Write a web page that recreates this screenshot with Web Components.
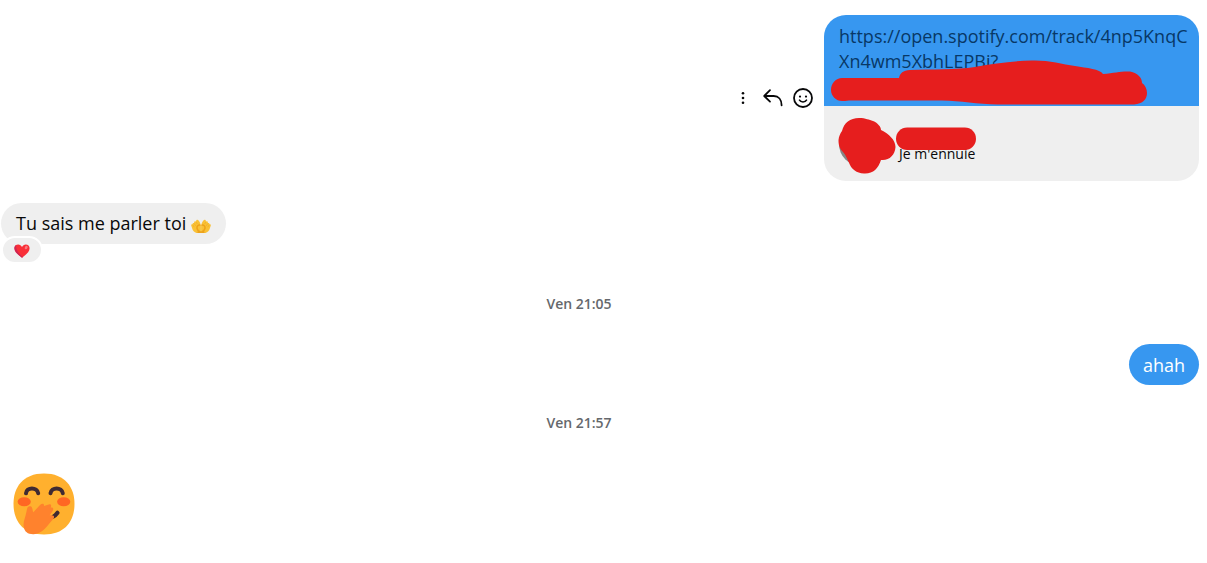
<!DOCTYPE html>
<html lang="fr">
<head>
<meta charset="utf-8">
<meta name="viewport" content="width=device-width">
<title>Discussion</title>
<style>
  body { margin: 0; background: #fff; font-family: "Open Sans", "Noto Sans", sans-serif; color: #080809; }
</style>
</head>
<body>
<chat-thread>
  <chat-message side="out">
    <message-actions slot="actions"></message-actions>
    <shared-link href="https://open.spotify.com/track/4np5KnqCXn4wm5XbhLEPBi" caption="Je m'ennuie">https://open.spotify.com/track/4np5KnqC<wbr>Xn4wm5XbhLEPBi?</shared-link>
  </chat-message>
  <chat-message side="in">
    <text-bubble>Tu sais me parler toi <palms-emoji></palms-emoji><heart-reaction slot="reaction"></heart-reaction></text-bubble>
  </chat-message>
  <time-divider>Ven 21:05</time-divider>
  <chat-message side="out"><text-bubble tone="own">ahah</text-bubble></chat-message>
  <time-divider>Ven 21:57</time-divider>
  <chat-message side="in"><giggle-emoji></giggle-emoji></chat-message>
</chat-thread>
<script>
const define = (name, html, setup) => customElements.define(name, class extends HTMLElement {
  constructor() {
    super();
    this.attachShadow({ mode: "open" }).innerHTML = html;
  }
  connectedCallback() { if (setup) setup(this, this.shadowRoot); }
});

define("chat-thread", `
<style>
  :host { display: flex; flex-direction: column; padding: 15px 8px 28px 1px; }
</style>
<slot></slot>`);

define("chat-message", `
<style>
  :host { display: flex; align-items: center; gap: 9px; }
  :host([side="out"]) { justify-content: flex-end; }
  :host([side="in"]:not(:last-of-type)) { margin-top: 22px; }
  :host([side="in"]:last-of-type) { padding-left: 12px; }
</style>
<slot name="actions"></slot><slot></slot>`);

define("message-actions", `
<style>
  :host { display: flex; align-items: center; gap: 6px; }
  button { display: grid; place-items: center; width: 24px; height: 24px; padding: 0; border: 0; background: none; color: #080809; cursor: pointer; }
  svg { display: block; width: 22px; height: 22px; fill: none; stroke: currentColor; stroke-width: 1.8; stroke-linecap: round; stroke-linejoin: round; }
  .dot { fill: currentColor; stroke: none; }
</style>
<button type="button" aria-label="Plus"><svg viewBox="0 0 22 22"><circle class="dot" cx="11" cy="6.3" r="1.3"/><circle class="dot" cx="11" cy="11" r="1.3"/><circle class="dot" cx="11" cy="15.7" r="1.3"/></svg></button>
<button type="button" aria-label="Répondre"><svg viewBox="0 0 22 22"><path d="M8 3.2 2.2 9 8 14.6M2.5 9h9.3c4.700 0 7.8 3.5 7.8 9.3"/></svg></button>
<button type="button" aria-label="Réagir"><svg viewBox="0 0 22 22"><circle cx="11" cy="11" r="9"/><path d="M7.5 13.2c1.3 2.300 5.7 2.300 7 0" stroke-width="1.6"/><circle class="dot" cx="8" cy="9.6" r="1.1"/><circle class="dot" cx="14" cy="9.6" r="1.1"/></svg></button>`);

define("shared-link", `
<style>
  :host { display: block; position: relative; width: 375px; max-width: 100%; border-radius: 22px; overflow: hidden; }
  .url { display: grid; grid-template-rows: 50px 25px; padding: 9px 10px 7px 15px; background: #3797f0; }
  a { color: #083866; font-size: 18px; line-height: 25px; text-decoration: none; }
  .card { display: flex; align-items: center; gap: 16px; padding: 15px; background: #efefef; }
  .avatar { width: 44px; height: 44px; border-radius: 50%; background: #858585; }
  .about { display: grid; grid-template-rows: 23px 20px; height: 45px; }
  .caption { font-size: 14px; line-height: 20px; grid-row: 2; }
  .marks { position: absolute; top: 0; left: 0; width: 375px; height: 166px; fill: #e61e1e; pointer-events: none; }
</style>
<div class="url"><a><slot></slot></a></div>
<div class="card"><div class="avatar"></div><div class="about"><div class="caption"></div></div></div>
<svg class="marks" viewBox="0 0 375 166" aria-hidden="true">
  <path d="M18 63H75C76 58 79 55.5 86 55C108 54 132 55 151 52C171 48 190 46 208 45.5C224 45 238 49 251 51C263 53 276 54 279 59C291 58 297 56 306 56.5C314 58 318 63 318 68C321 70 323 74 323 78C323 84 319 89 310 89.5H174C153 89 137 86 118 85.5H25C22 86 20 86 18 86C12 86 7 81 7 75C7 68 12 63 18 63Z"/>
  <path d="M35 103C42 103 45 105 49 106C54 108 57 112 57 115C65 119 71.500 125 71.500 132C71 140 65 146 57 145C54 154 49 159 40 158.500C32 158 28 154 26 150C23 144 22 140 19 137C15 133 14.500 129 14.500 125C15 121 16 119 18 116C20 108 26 103 35 103Z"/>
  <rect x="72" y="112.5" width="80" height="22.500" rx="11.2"/>
</svg>`, (host, root) => {
  root.querySelector("a").href = host.getAttribute("href");
  root.querySelector(".caption").textContent = host.getAttribute("caption");
});

define("text-bubble", `
<style>
  :host { display: block; position: relative; padding: 8px 15px; border-radius: 21px; background: #efefef; font-size: 18px; line-height: 25px; }
  :host([tone="own"]) { padding: 9px 14px 7px; background: #3797f0; color: #fff; }
  ::slotted([slot="reaction"]) { position: absolute; left: 0; top: 33px; }
</style>
<slot></slot><slot name="reaction"></slot>`);

define("heart-reaction", `
<style>
  :host { display: grid; place-items: end center; width: 38px; height: 24px; border: 2px solid #fff; border-radius: 14px; background: #efefef; }
  svg { display: block; width: 16px; height: 16px; padding-bottom: 3px; }
</style>
<svg viewBox="0 0 16 16" role="img" aria-label="Cœur"><path fill="#f92f38" d="M8 14.7C3.5 11.5.4 8.5.4 5.2.4 3 2 1.5 4.2 1.5 5.9 1.5 7.2 2.4 8 3.9 8.8 2.4 10.1 1.5 11.8 1.5c2.2 0 3.8 1.5 3.8 3.7 0 3.3-3.1 6.3-7.6 9.5Z"/><path fill="#ce2554" d="M8 14.7C3.5 11.5.4 8.5.4 5.2c0-1.4.7-2.6 1.8-3.2-.6 4.6 1.8 8.5 6.8 12Z"/><ellipse cx="12.200" cy="4.5" rx="1.3" ry="1.9" transform="rotate(32 12.2 4.5)" fill="#f9797e"/></svg>`);

define("palms-emoji", `
<style>
  :host { display: inline-block; width: 20px; height: 16px; vertical-align: -4px; }
  svg { display: block; width: 20px; height: 16px; }
</style>
<svg viewBox="0 0 20 16" role="img" aria-label="Paumes ouvertes">
  <g id="palm"><path fill="#f9c136" d="M9.9 15H5.6C3.200 14.500 1.700 12.500 1.200 10.500L.2 7.400C.1 6.400 1 6 1.600 6.500 1.300 5.100 2.400 4.500 3.100 5.200 2.900 3.500 4.200 2.900 5 3.700 5 1.700 6.700 1.300 7.600 2.600 9 4.300 9.700 6.300 9.900 8.400Z"/><path fill="#eda31c" d="M9.800 8.100C7.900 7 6.200 8.500 6.900 10.400 7.400 11.700 8.800 12.700 9.900 13.300V15H5.700C8.500 14.400 5.200 12.200 5.200 9.800 5.200 6.900 7.800 5.600 9.300 6.600Z"/><path d="m1.700 6.700 1.500 2.500M3.200 5.400l1.500 2.500M5.100 4l1.200 2" fill="none" stroke="#e8a524" stroke-width=".5"/></g>
  <use href="#palm" transform="matrix(-1 0 0 1 20 0)"/>
</svg>`);

define("time-divider", `
<style>
  :host { display: block; padding-right: 42px; margin-top: 50px; margin-bottom: 30px; text-align: center; color: #65686c; font-size: 14px; font-weight: 600; line-height: 20px; }
  :host(:nth-of-type(2)) { margin-top: 28px; margin-bottom: 40px; }
</style>
<slot></slot>`);

define("giggle-emoji", `
<style>
  :host { display: block; width: 62px; height: 62px; }
  svg { display: block; width: 62px; height: 62px; }
</style>
<svg viewBox="0 0 62 62" role="img" aria-label="Visage souriant avec main sur la bouche">
  <path fill="#ffb02e" d="M31 .5C52 .5 61.5 14 61.5 31S52 61.5 31 61.5.5 48 .5 31 10 .5 31 .5Z"/>
  <ellipse cx="11.2" cy="28.8" rx="6.6" ry="4.5" fill="#ff6723"/><ellipse cx="50.7" cy="28.8" rx="6.6" ry="4.5" fill="#ff6723"/>
  <path d="M13 20.3c.5-6.400 11.2-6.6 12.2 0M37.5 20.300c.8-6.6 11.4-6.5 12.3 0" fill="none" stroke="#402a32" stroke-width="4" stroke-linecap="round"/>
  <path d="M44.5 39.800C43.200 41.500 42 42.700 40.500 43.500" fill="none" stroke="#402a32" stroke-width="4.2" stroke-linecap="round"/>
  <path fill="#ff822d" d="M10.9 54.5C9.5 49.5 12.5 44.5 13.5 38.5 14.2 33.5 15.5 32.7 17.5 33.3 20 34 19.2 37.5 20.3 39.3L27 32c2.200-2 4.500-1.500 4 1L34.800 31.8c3-1.8 4.100.5 2.900 2.700C40.2 33.9 41 36 39.5 38.2L36.7 42.5C40.8 41.2 42.4 43.5 40 46.3 34 52.5 30 61 20.5 61.2 14.5 61.3 11.8 58.6 10.9 54.5Z"/>
</svg>`);
</script>
</body>
</html>
